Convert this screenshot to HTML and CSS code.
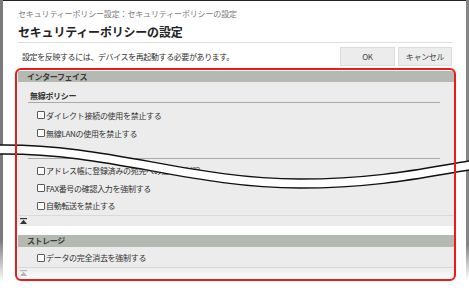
FILE: index.html
```html
<!DOCTYPE html>
<html lang="ja">
<head>
<meta charset="utf-8">
<link rel="stylesheet" href="styles.css">
</head>
<body>
<div class="window">
  <div class="edge edge-left"></div>
  <div class="main">
    <div class="head">
      <div class="crumb">セキュリティーポリシー設定：セキュリティーポリシーの設定</div>
      <h1 class="title">セキュリティーポリシーの設定</h1>
      <div class="actions">
        <p class="note">設定を反映するには、デバイスを再起動する必要があります。</p>
        <div class="buttons">
          <button class="btn btn-ok">OK</button>
          <button class="btn btn-cancel">キャンセル</button>
        </div>
      </div>
    </div>
    <div class="frame">
      <section class="group">
        <div class="group-head">インターフェイス</div>
        <div class="group-body">
          <div class="sub">
            <div class="sub-title">無線ポリシー</div>
            <div class="row"><span class="cb"></span>ダイレクト接続の使用を禁止する</div>
            <div class="row"><span class="cb"></span>無線LANの使用を禁止する</div>
          </div>
          <div class="sub sub-tight">
            <div class="sub-title sub-title-hidden"></div>
            <div class="row"><span class="cb"></span>アドレス帳に登録済みの宛先への送信に制限</div>
            <div class="row"><span class="cb"></span>FAX番号の確認入力を強制する</div>
            <div class="row"><span class="cb"></span>自動転送を禁止する</div>
          </div>
        </div>
        <div class="group-foot">
          <svg class="top-icon" width="7" height="6" viewBox="0 0 7 6"><rect x="0" y="0" width="7" height="1.2" fill="currentColor"/><polygon points="3.5,1.8 7,6 0,6" fill="currentColor"/></svg>
        </div>
      </section>
      <section class="group group-storage">
        <div class="group-head">ストレージ</div>
        <div class="group-body">
          <div class="row row-storage"><span class="cb"></span>データの完全消去を強制する</div>
        </div>
        <div class="group-foot group-foot-fade">
          <svg class="top-icon" width="7" height="6" viewBox="0 0 7 6"><rect x="0" y="0" width="7" height="1.2" fill="currentColor"/><polygon points="3.5,1.8 7,6 0,6" fill="currentColor"/></svg>
        </div>
      </section>
    </div>
  </div>
  <div class="edge edge-right"></div>
  <svg class="break" width="469" height="291" viewBox="0 0 469 291">
    <path d="M0,145 C110,144 190,179 300,179 C380,179 430,167 469,161 L469,170 C430,176 380,188 300,188 C190,188 110,153 0,154 Z" fill="#fff"/>
    <path d="M0,145 C110,144 190,179 300,179 C380,179 430,167 469,161" fill="none" stroke="#111" stroke-width="1.3"/>
    <path d="M0,154 C110,153 190,188 300,188 C380,188 430,176 469,170" fill="none" stroke="#111" stroke-width="1.3"/>
  </svg>
</div>
</body>
</html>
```
FILE: styles.css
```css
* { box-sizing: border-box; }
html, body {
  margin: 0;
  padding: 0;
  background: #fff;
}
body {
  font-family: "Noto Sans CJK JP", "Noto Sans", sans-serif;
  color: #333;
}
.window {
  position: relative;
  width: 469px;
  height: 291px;
  display: flex;
  overflow: hidden;
}
.edge {
  flex: none;
  height: 100%;
}
.edge-left {
  width: 3px;
  background: linear-gradient(to bottom, #7b7b7b 0, #7b7b7b 240px, #fff 282px);
}
.edge-right {
  width: 3px;
  background: linear-gradient(to bottom, #858585 0, #858585 245px, #fff 280px);
}
.main {
  flex: 1;
  border-top: 1px solid #222;
  padding: 0 10px 0 12px;
  display: flex;
  flex-direction: column;
}
.head {
  padding: 0 4px 0 3px;
}
.crumb {
  margin-top: 7px;
  font-size: 8px;
  line-height: 12px;
  letter-spacing: -0.15px;
  color: #7a7a7a;
}
.title {
  margin: 4px 0 0;
  font-size: 12px;
  line-height: 16px;
  font-weight: 700;
  letter-spacing: -0.2px;
  color: #222;
  padding-bottom: 2px;
  border-bottom: 1px solid #dedede;
}
.actions {
  margin-top: 4px;
  display: flex;
  align-items: center;
  justify-content: space-between;
}
.note {
  margin: 0 0 0 4px;
  font-size: 8px;
  line-height: 12px;
  letter-spacing: -0.4px;
  color: #333;
}
.buttons {
  display: flex;
  gap: 3px;
}
.btn {
  height: 19px;
  margin: 0;
  padding: 0;
  background: #ececec;
  border: 1px solid #dcdcdc;
  border-radius: 0;
  font-family: inherit;
  font-size: 8px;
  color: #444;
  letter-spacing: -0.3px;
}
.btn-ok { width: 55px; }
.btn-cancel { width: 54px; }
.frame {
  position: relative;
  margin-top: 2px;
  height: 213px;
  border-radius: 6px;
  padding: 3px 2px 1px 3px;
  display: flex;
  flex-direction: column;
  gap: 9px;
}
.frame::after {
  content: "";
  position: absolute;
  inset: 0;
  border: 2px solid #f01818;
  border-radius: 6px;
  z-index: 3;
  pointer-events: none;
}
.group {
  background: #ececec;
}
.group-head {
  height: 11px;
  background: #b4b9b1;
  padding-left: 9px;
  font-size: 8px;
  line-height: 11px;
  font-weight: 700;
  letter-spacing: -0.4px;
  color: #3a3a3a;
}
.group-storage .group-head {
  height: 12px;
  line-height: 12px;
}
.sub {
  margin: 0 14px 0 10px;
}
.sub-title {
  padding: 8px 0 0 2px;
  height: 21px;
  font-size: 8px;
  line-height: 12px;
  font-weight: 700;
  letter-spacing: -0.3px;
  color: #333;
  border-bottom: 1px solid #a9a9a9;
  margin-bottom: 3px;
}
.sub-title-hidden {
  height: 17px;
}
.row {
  display: flex;
  align-items: center;
  height: 18px;
  padding-left: 9px;
  font-size: 8px;
  letter-spacing: -0.3px;
  color: #333;
  white-space: nowrap;
}
.sub-tight .row {
  height: 17.5px;
}
.row-storage {
  margin-top: 2px;
  padding-left: 19px;
  height: 18px;
}
.cb {
  display: inline-block;
  width: 8px;
  height: 8px;
  margin-right: 1px;
  border: 1px solid #5a5a5a;
  border-radius: 1px;
  background: #fff;
  flex: none;
}
.group-foot {
  height: 11px;
  border-top: 1px solid #d9d9d9;
  padding-left: 2px;
  display: flex;
  align-items: center;
  color: #333;
}
.group-foot-fade {
  height: 12px;
  background: linear-gradient(to bottom, #ededed, #fbfbfb);
  color: #b5b5b5;
}
.top-icon {
  display: block;
}
.break {
  position: absolute;
  left: 0;
  top: 0;
  z-index: 2;
  pointer-events: none;
}
```
